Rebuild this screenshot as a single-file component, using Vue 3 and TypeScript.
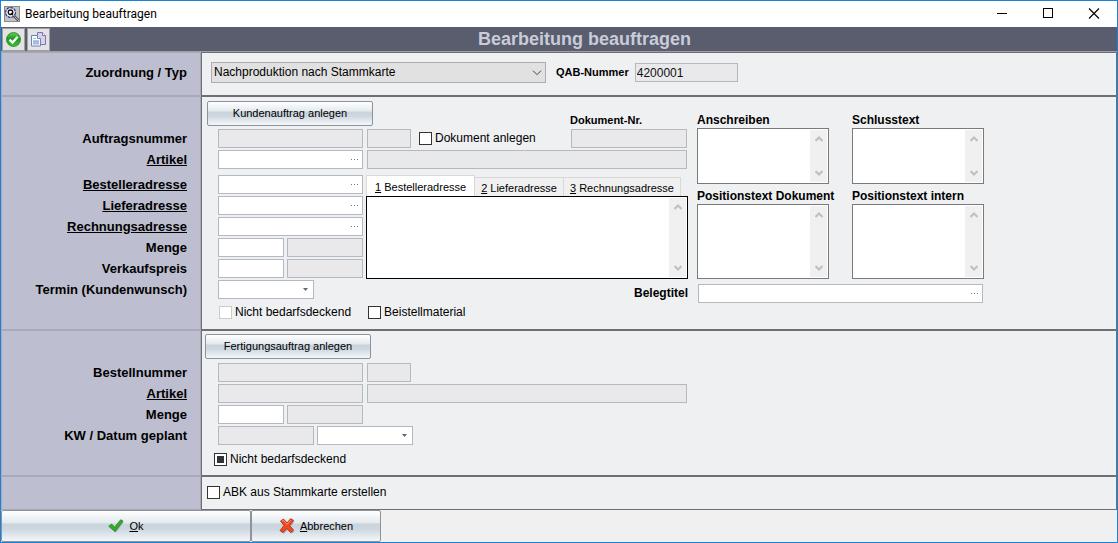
<script setup lang="ts">
import { reactive } from 'vue'

interface SideLabel {
  text: string
  link?: boolean
  spaced?: boolean
}

const orderLabels: SideLabel[] = [
  { text: 'Auftragsnummer' },
  { text: 'Artikel', link: true },
  { text: 'Bestelleradresse', link: true, spaced: true },
  { text: 'Lieferadresse', link: true },
  { text: 'Rechnungsadresse', link: true },
  { text: 'Menge' },
  { text: 'Verkaufspreis' },
  { text: 'Termin (Kundenwunsch)' },
]

const productionLabels: SideLabel[] = [
  { text: 'Bestellnummer' },
  { text: 'Artikel', link: true },
  { text: 'Menge' },
  { text: 'KW / Datum geplant' },
]

const tabs = [
  { key: '1', title: 'Bestelleradresse' },
  { key: '2', title: 'Lieferadresse' },
  { key: '3', title: 'Rechnungsadresse' },
]

const notes = [
  { id: 'anschreiben', title: 'Anschreiben', tall: false },
  { id: 'schlusstext', title: 'Schlusstext', tall: false },
  { id: 'pos-dokument', title: 'Positionstext Dokument', tall: true },
  { id: 'pos-intern', title: 'Positionstext intern', tall: true },
]

const addressFields = ['Bestelleradresse', 'Lieferadresse', 'Rechnungsadresse']
const amountFields = ['Menge', 'Verkaufspreis']

const form = reactive({
  type: 'Nachproduktion nach Stammkarte',
  qab: '4200001',
  activeTab: '1',
  createDocument: false,
  notCovering: false,
  suppliedMaterial: false,
  abk: false,
})
</script>

<template>
  <div class="window">
    <header class="titlebar">
      <svg class="app-icon" width="16" height="16" viewBox="0 0 16 16">
        <rect x="0.5" y="0.5" width="15" height="15" fill="#c3c3c6" stroke="#8a8a8a" />
        <path d="M10 10l4.500 4.500" stroke="#55555c" stroke-width="2.600" />
        <path d="M10.500 10.500l4 4" stroke="#d8d8d8" stroke-width="0.800" />
        <circle cx="6.500" cy="6.500" r="4.900" fill="#fff" stroke="#31317c" stroke-width="1.200" stroke-dasharray="3 0.700" />
        <circle cx="6.500" cy="6.300" r="2.300" fill="none" stroke="#111" stroke-width="1.300" />
        <path d="M6.800 7l2.200 2.300" stroke="#111" stroke-width="1.300" />
      </svg>
      <span class="caption">Bearbeitung beauftragen</span>
      <button class="sys" type="button" aria-label="Minimieren">
        <svg width="12" height="12" viewBox="0 0 12 12"><path d="M1 5.500h10" stroke="#000" fill="none" /></svg>
      </button>
      <button class="sys" type="button" aria-label="Maximieren">
        <svg width="12" height="12" viewBox="0 0 12 12"><rect x="1.500" y="0.500" width="9" height="9" stroke="#000" fill="none" /></svg>
      </button>
      <button class="sys" type="button" aria-label="Schließen">
        <svg width="12" height="12" viewBox="0 0 12 12"><path d="M1 0.500l10 10M11 0.500L1 10.500" stroke="#000" stroke-width="1.100" fill="none" /></svg>
      </button>
    </header>

    <div class="toolbar">
      <button class="tool" type="button" aria-label="Bestätigen">
        <svg width="17" height="17" viewBox="0 0 17 17">
          <defs>
            <linearGradient id="ballFill" x1="0" y1="0" x2="0" y2="1">
              <stop offset="0" stop-color="#6fc95c" />
              <stop offset="0.450" stop-color="#1f9a1f" />
              <stop offset="1" stop-color="#3cc23a" />
            </linearGradient>
          </defs>
          <circle cx="8.500" cy="8.500" r="7" fill="url(#ballFill)" stroke="#198a1c" stroke-width="0.800" />
          <path d="M4.500 8.700l3 2.900 5.200-5.800" fill="none" stroke="#fff" stroke-width="2.300" />
        </svg>
      </button>
      <button class="tool" type="button" aria-label="Kopieren">
        <svg width="17" height="17" viewBox="0 0 17 17">
          <path d="M7.500 1.500h5l3 3v9h-8z" fill="#d9d2ee" stroke="#8270b0" />
          <path d="M12.500 1.500v3h3" fill="#fff" stroke="#8270b0" />
          <path d="M1.500 4.500h6l3 3v7.500h-9z" fill="#f4f8ff" stroke="#6f86b4" />
          <path d="M7.500 4.500v3h3" fill="#fff" stroke="#6f86b4" />
          <path d="M3 9h6v4.500H3z" fill="#b4c5e6" />
          <path d="M3 7.500h3M3 10.500h6M3 12.500h6" stroke="#93a9d3" stroke-width="0.700" />
        </svg>
      </button>
      <h1>Bearbeitung beauftragen</h1>
    </div>

    <main>
      <section>
        <div class="side type-side"><label class="side-label" for="type">Zuordnung / Typ</label></div>
        <div class="content type-row">
          <span class="select-box">
            <select id="type" v-model="form.type">
              <option>Nachproduktion nach Stammkarte</option>
            </select>
            <svg class="select-arrow" width="10" height="6" viewBox="0 0 10 6"><path d="M1 0.700l4 4 4-4" fill="none" stroke="#444" /></svg>
          </span>
          <label class="small-label" for="qab">QAB-Nummer</label>
          <input id="qab" v-model="form.qab" class="field locked qab" readonly />
        </div>
      </section>

      <section>
        <div class="side rows">
          <template v-for="l in orderLabels" :key="l.text">
            <a v-if="l.link" href="#" class="side-label" :class="{ spaced: l.spaced }">{{ l.text }}</a>
            <span v-else class="side-label">{{ l.text }}</span>
          </template>
        </div>
        <div class="content order">
          <div class="order-main">
            <div class="order-head">
              <button class="glossy action" type="button">Kundenauftrag anlegen</button>
              <label class="small-label doc-label" for="doc-nr">Dokument-Nr.</label>
            </div>
            <div class="line">
              <input class="field locked w-main" readonly aria-label="Auftragsnummer" />
              <input class="field locked w-short" readonly aria-label="Position" />
              <label class="check doc-check"><input v-model="form.createDocument" type="checkbox" />Dokument anlegen</label>
              <input id="doc-nr" class="field locked w-doc" readonly />
            </div>
            <div class="line">
              <span class="field lookup w-main">
                <input aria-label="Artikel" />
                <button type="button" aria-label="Artikel suchen"><svg width="7" height="1" viewBox="0 0 7 1"><path d="M0 0h1v1H0zM3 0h1v1H3zM6 0h1v1H6z" fill="#777" /></svg></button>
              </span>
              <input class="field locked grow" readonly aria-label="Artikelbezeichnung" />
            </div>
            <div class="details">
              <div class="stack">
                <span v-for="a in addressFields" :key="a" class="field lookup w-main">
                  <input :aria-label="a" />
                  <button type="button" :aria-label="a + ' suchen'"><svg width="7" height="1" viewBox="0 0 7 1"><path d="M0 0h1v1H0zM3 0h1v1H3zM6 0h1v1H6z" fill="#777" /></svg></button>
                </span>
                <div v-for="a in amountFields" :key="a" class="line pair">
                  <input class="field w-amount" :aria-label="a" />
                  <input class="field locked grow" readonly :aria-label="a + ' Einheit'" />
                </div>
                <span class="field lookup w-date">
                  <input aria-label="Termin (Kundenwunsch)" />
                  <button type="button" aria-label="Datum wählen"><svg width="5" height="3" viewBox="0 0 5 3"><path d="M0 0h5L2.500 3z" fill="#666" /></svg></button>
                </span>
              </div>
              <div class="addresses">
                <div class="tabs" role="tablist">
                  <button
                    v-for="t in tabs"
                    :key="t.key"
                    type="button"
                    role="tab"
                    :aria-selected="form.activeTab === t.key"
                    :class="{ active: form.activeTab === t.key }"
                    @click="form.activeTab = t.key"
                  ><u>{{ t.key }}</u> {{ t.title }}</button>
                </div>
                <div class="memo address-memo">
                  <textarea aria-label="Adresse"></textarea>
                  <span class="scroll">
                    <svg width="8" height="6" viewBox="0 0 8 6"><path d="M0.500 5L4 1.500 7.500 5" /></svg>
                    <svg width="8" height="6" viewBox="0 0 8 6"><path d="M0.500 1L4 4.500 7.500 1" /></svg>
                  </span>
                </div>
                <label class="small-label beleg-label" for="beleg">Belegtitel</label>
              </div>
            </div>
            <div class="checks">
              <label class="check muted"><input v-model="form.notCovering" type="checkbox" />Nicht bedarfsdeckend</label>
              <label class="check"><input v-model="form.suppliedMaterial" type="checkbox" />Beistellmaterial</label>
            </div>
          </div>

          <div class="notes">
            <div v-for="n in notes" :key="n.id" class="note">
              <label class="small-label" :for="n.id">{{ n.title }}</label>
              <div class="memo" :class="{ tall: n.tall }">
                <textarea :id="n.id"></textarea>
                <span class="scroll">
                  <svg width="8" height="6" viewBox="0 0 8 6"><path d="M0.500 5L4 1.500 7.500 5" /></svg>
                  <svg width="8" height="6" viewBox="0 0 8 6"><path d="M0.500 1L4 4.500 7.500 1" /></svg>
                </span>
              </div>
            </div>
            <span class="field lookup beleg">
              <input id="beleg" />
              <button type="button" aria-label="Belegtitel suchen"><svg width="7" height="1" viewBox="0 0 7 1"><path d="M0 0h1v1H0zM3 0h1v1H3zM6 0h1v1H6z" fill="#777" /></svg></button>
            </span>
          </div>
        </div>
      </section>

      <section>
        <div class="side rows">
          <template v-for="l in productionLabels" :key="l.text">
            <a v-if="l.link" href="#" class="side-label">{{ l.text }}</a>
            <span v-else class="side-label">{{ l.text }}</span>
          </template>
        </div>
        <div class="content production">
          <button class="glossy action" type="button">Fertigungsauftrag anlegen</button>
          <div class="line">
            <input class="field locked w-main" readonly aria-label="Bestellnummer" />
            <input class="field locked w-short" readonly aria-label="Position" />
          </div>
          <div class="line">
            <input class="field locked w-main" readonly aria-label="Artikel" />
            <input class="field locked w-long" readonly aria-label="Artikelbezeichnung" />
          </div>
          <div class="line pair w-main">
            <input class="field w-amount" aria-label="Menge" />
            <input class="field locked grow" readonly aria-label="Einheit" />
          </div>
          <div class="line pair">
            <input class="field locked w-date" readonly aria-label="Kalenderwoche" />
            <span class="field lookup w-date">
              <input aria-label="Datum geplant" />
              <button type="button" aria-label="Datum wählen"><svg width="5" height="3" viewBox="0 0 5 3"><path d="M0 0h5L2.500 3z" fill="#666" /></svg></button>
            </span>
          </div>
          <label class="check"><input type="checkbox" :indeterminate.prop="true" />Nicht bedarfsdeckend</label>
        </div>
      </section>

      <section>
        <div class="side"></div>
        <div class="content abk">
          <label class="check"><input v-model="form.abk" type="checkbox" />ABK aus Stammkarte erstellen</label>
        </div>
      </section>
    </main>

    <footer>
      <button class="glossy ok" type="button">
        <svg width="16" height="14" viewBox="0 0 16 14">
          <path d="M1 7.500L4 5.500l2.700 3L13 1l2.300 1.300L7.300 13z" fill="#667" opacity="0.400" transform="translate(0.500 0.700)" />
          <path d="M0.700 7.200L3.700 5l2.800 3.200L12.700 0.700 15 2 7 12.500z" fill="#2fae28" stroke="#1c7f1b" stroke-width="0.700" />
        </svg>
        <span><u>O</u>k</span>
      </button>
      <button class="glossy cancel" type="button">
        <svg width="16" height="16" viewBox="0 0 16 16">
          <path d="M2 3l3-2 3.500 4L12 1l3 1.500-4 5.500 4 4.500-3 2.500-3.800-4L4 15l-3-2 4.300-5z" fill="#555" opacity="0.400" transform="translate(0.600 0.700)" />
          <path d="M1.500 3L4.500 1l3.500 4L11.500 0.700l3 1.500-4 5.300 4 4.500-3 2.500L7.700 10.500 4 14.500l-3-2 4-5z" fill="#f04a22" stroke="#b8250e" stroke-width="0.800" />
          <path d="M3 3l1.500-0.700L8 6.200l3.700-4" fill="none" stroke="#ff9a78" stroke-width="0.900" />
        </svg>
        <span><u>A</u>bbrechen</span>
      </button>
    </footer>
  </div>
</template>

<style>
body {
  margin: 0;
  background: #f0f0f0;
}
</style>

<style scoped>
* {
  box-sizing: border-box;
}

.window {
  min-height: 100vh;
  display: flex;
  flex-direction: column;
  border: 1px solid #1883d7;
  background: #f0f0f0;
  color: #000;
  font: 12px/15px "Liberation Sans", Arial, sans-serif;
}

button,
input,
select,
textarea {
  font: inherit;
  color: inherit;
  margin: 0;
  border-radius: 0;
  outline: 0;
}

button {
  padding: 0;
  border: 0;
  background: none;
}

svg {
  display: block;
  flex: none;
}

.titlebar {
  display: flex;
  align-items: center;
  height: 26px;
  padding-left: 3px;
  background: #fff;
}

.caption {
  flex: 1;
  padding-left: 5px;
  font: 12px/16px Roboto, "Noto Sans", sans-serif;
}

.sys {
  width: 46px;
  height: 26px;
  display: flex;
  align-items: center;
  justify-content: center;
}

.toolbar {
  display: flex;
  align-items: center;
  gap: 2px;
  height: 25px;
  padding-left: 1px;
  background: #5a5d6e;
  border-bottom: 1px solid #a0a0a4;
}

.tool {
  width: 23px;
  height: 23px;
  display: flex;
  align-items: center;
  justify-content: center;
  background: #e3e3e3;
  border: 1px solid #a0a0a0;
}

h1 {
  flex: 1;
  margin: 0;
  text-align: center;
  font-size: 18px;
  line-height: 24px;
  color: #c9cbd9;
}

section {
  display: flex;
}

.side {
  flex: none;
  width: 200px;
  padding-right: 13px;
  background: #bdbecf;
  border: 1px solid #a8a9b8;
  text-align: right;
}

.side-label {
  display: block;
  color: #000;
  font-size: 13px;
  font-weight: bold;
  line-height: 19px;
}

.spaced {
  margin-top: 4px;
}

.rows {
  display: flex;
  flex-direction: column;
  align-items: flex-end;
  gap: 2px;
  padding-top: 32px;
}

.content {
  flex: 1;
  min-width: 0;
  background: #eff0f2;
  border: 1px solid #6e6f74;
}

.type-side {
  padding-top: 10px;
}

.type-row {
  display: flex;
  align-items: center;
  height: 44px;
  padding: 0 9px 3px;
}

.select-box {
  position: relative;
  width: 335px;
}

.select-box select {
  display: block;
  width: 100%;
  height: 21px;
  padding: 0 20px 0 2px;
  appearance: none;
  background: #e1e1e1;
  border: 1px solid #adadad;
}

.select-arrow {
  position: absolute;
  right: 4px;
  top: 8px;
  pointer-events: none;
}

.small-label {
  font-size: 11px;
  font-weight: bold;
  line-height: 15px;
}

.type-row .small-label {
  margin: 0 6px 0 10px;
}

.field {
  display: block;
  flex: none;
  height: 19px;
  padding: 0 2px;
  background: #fff;
  border: 1px solid #b4b8c0;
}

.locked {
  background: #e9e9eb;
}

.qab {
  width: 103px;
  padding: 0 1px;
  color: #111;
}

.lookup {
  display: flex;
  padding: 0;
}

.lookup input {
  flex: 1;
  min-width: 0;
  padding: 0 2px;
  border: 0;
  background: none;
}

.lookup button {
  width: 16px;
  display: flex;
  align-items: center;
  justify-content: center;
}

.w-main {
  width: 145px;
}

.w-short {
  width: 44px;
}

.w-doc {
  width: 116px;
  margin-left: auto;
}

.w-long {
  width: 320px;
}

.w-amount {
  width: 66px;
}

.w-date {
  width: 96px;
}

.grow {
  flex: 1;
  min-width: 0;
}

.line {
  display: flex;
  gap: 4px;
}

.pair {
  gap: 3px;
}

.glossy {
  display: flex;
  align-items: center;
  justify-content: center;
  border: 1px solid #8d929c;
  border-radius: 2px;
  background: linear-gradient(#fff 0%, #e3e9ee 40%, #c9d3dc 43%, #cdd7df 60%, #f4f7f9 100%);
  font-size: 11px;
}

.action {
  width: 166px;
  height: 25px;
}

.order {
  display: flex;
  gap: 9px;
  padding: 4px 16px 9px;
}

.order-main {
  width: 470px;
  display: flex;
  flex-direction: column;
  gap: 2px;
}

.order-main > .line {
  margin-right: 1px;
}

.order-head {
  display: flex;
  justify-content: space-between;
  height: 26px;
}

.order-head .action {
  margin-left: -11px;
}

.doc-label {
  width: 118px;
  padding-top: 12px;
}

.doc-check {
  padding-left: 4px;
}

.check {
  display: flex;
  align-items: center;
  gap: 3px;
  white-space: nowrap;
}

.check input {
  flex: none;
  width: 13px;
  height: 13px;
  appearance: none;
  background: #fff;
  border: 1px solid #333;
}

.check input:indeterminate,
.check input:checked {
  background: #333;
  box-shadow: inset 0 0 0 2px #fff;
}

.muted input {
  border-color: #ccc;
}

.details {
  display: flex;
  gap: 3px;
  margin-top: 4px;
}

.stack {
  display: flex;
  flex-direction: column;
  gap: 2px;
  width: 145px;
}

.addresses {
  flex: 1;
}

.tabs {
  display: flex;
  align-items: flex-end;
  height: 21px;
}

.tabs button {
  height: 19px;
  padding: 1px 6px 0;
  font-size: 11px;
  line-height: 16px;
  background: #f0f0f0;
  border: solid #d9d9d9;
  border-width: 1px 1px 0 0;
}

.tabs button.active {
  height: 21px;
  padding: 2px 8px 0;
  background: #fff;
  border-left-width: 1px;
}

.memo {
  display: flex;
  height: 56px;
  padding: 1px;
  background: #fff;
  border: 1px solid #7a7a7a;
}

.memo textarea {
  flex: 1;
  min-width: 0;
  border: 0;
  padding: 2px;
  resize: none;
  overflow: hidden;
  background: none;
}

.tall {
  height: 75px;
}

.address-memo {
  height: 83px;
  border-color: #000;
}

.scroll {
  width: 17px;
  padding: 6px 0;
  display: flex;
  flex-direction: column;
  justify-content: space-between;
  align-items: center;
  background: #f0f0f0;
}

.scroll path {
  fill: none;
  stroke: #bfbfbf;
  stroke-width: 2;
}

.beleg-label {
  display: block;
  margin-top: 5px;
  line-height: 19px;
  text-align: right;
}

.checks {
  display: flex;
  gap: 17px;
  padding-left: 1px;
}

.notes {
  display: grid;
  grid-template-columns: 132px 132px;
  column-gap: 23px;
  row-gap: 5px;
  align-content: start;
  padding-top: 12px;
}

.note .small-label {
  display: block;
  white-space: nowrap;
}

.note .small-label,
.beleg-label {
  font-size: 12px;
}

.beleg {
  grid-column: 1 / -1;
  margin: 0 1px;
}

.production {
  display: flex;
  flex-direction: column;
  gap: 2px;
  padding: 3px 16px 8px;
}

.production .action {
  margin: 0 0 2px -13px;
}

.production .check {
  margin: 5px 0 0 -4px;
}

.abk {
  padding: 8px 5px 9px;
}

footer {
  display: flex;
}

footer .glossy {
  height: 32px;
  gap: 5px;
}

.ok {
  width: 250px;
}

.cancel {
  width: 130px;
}
</style>
